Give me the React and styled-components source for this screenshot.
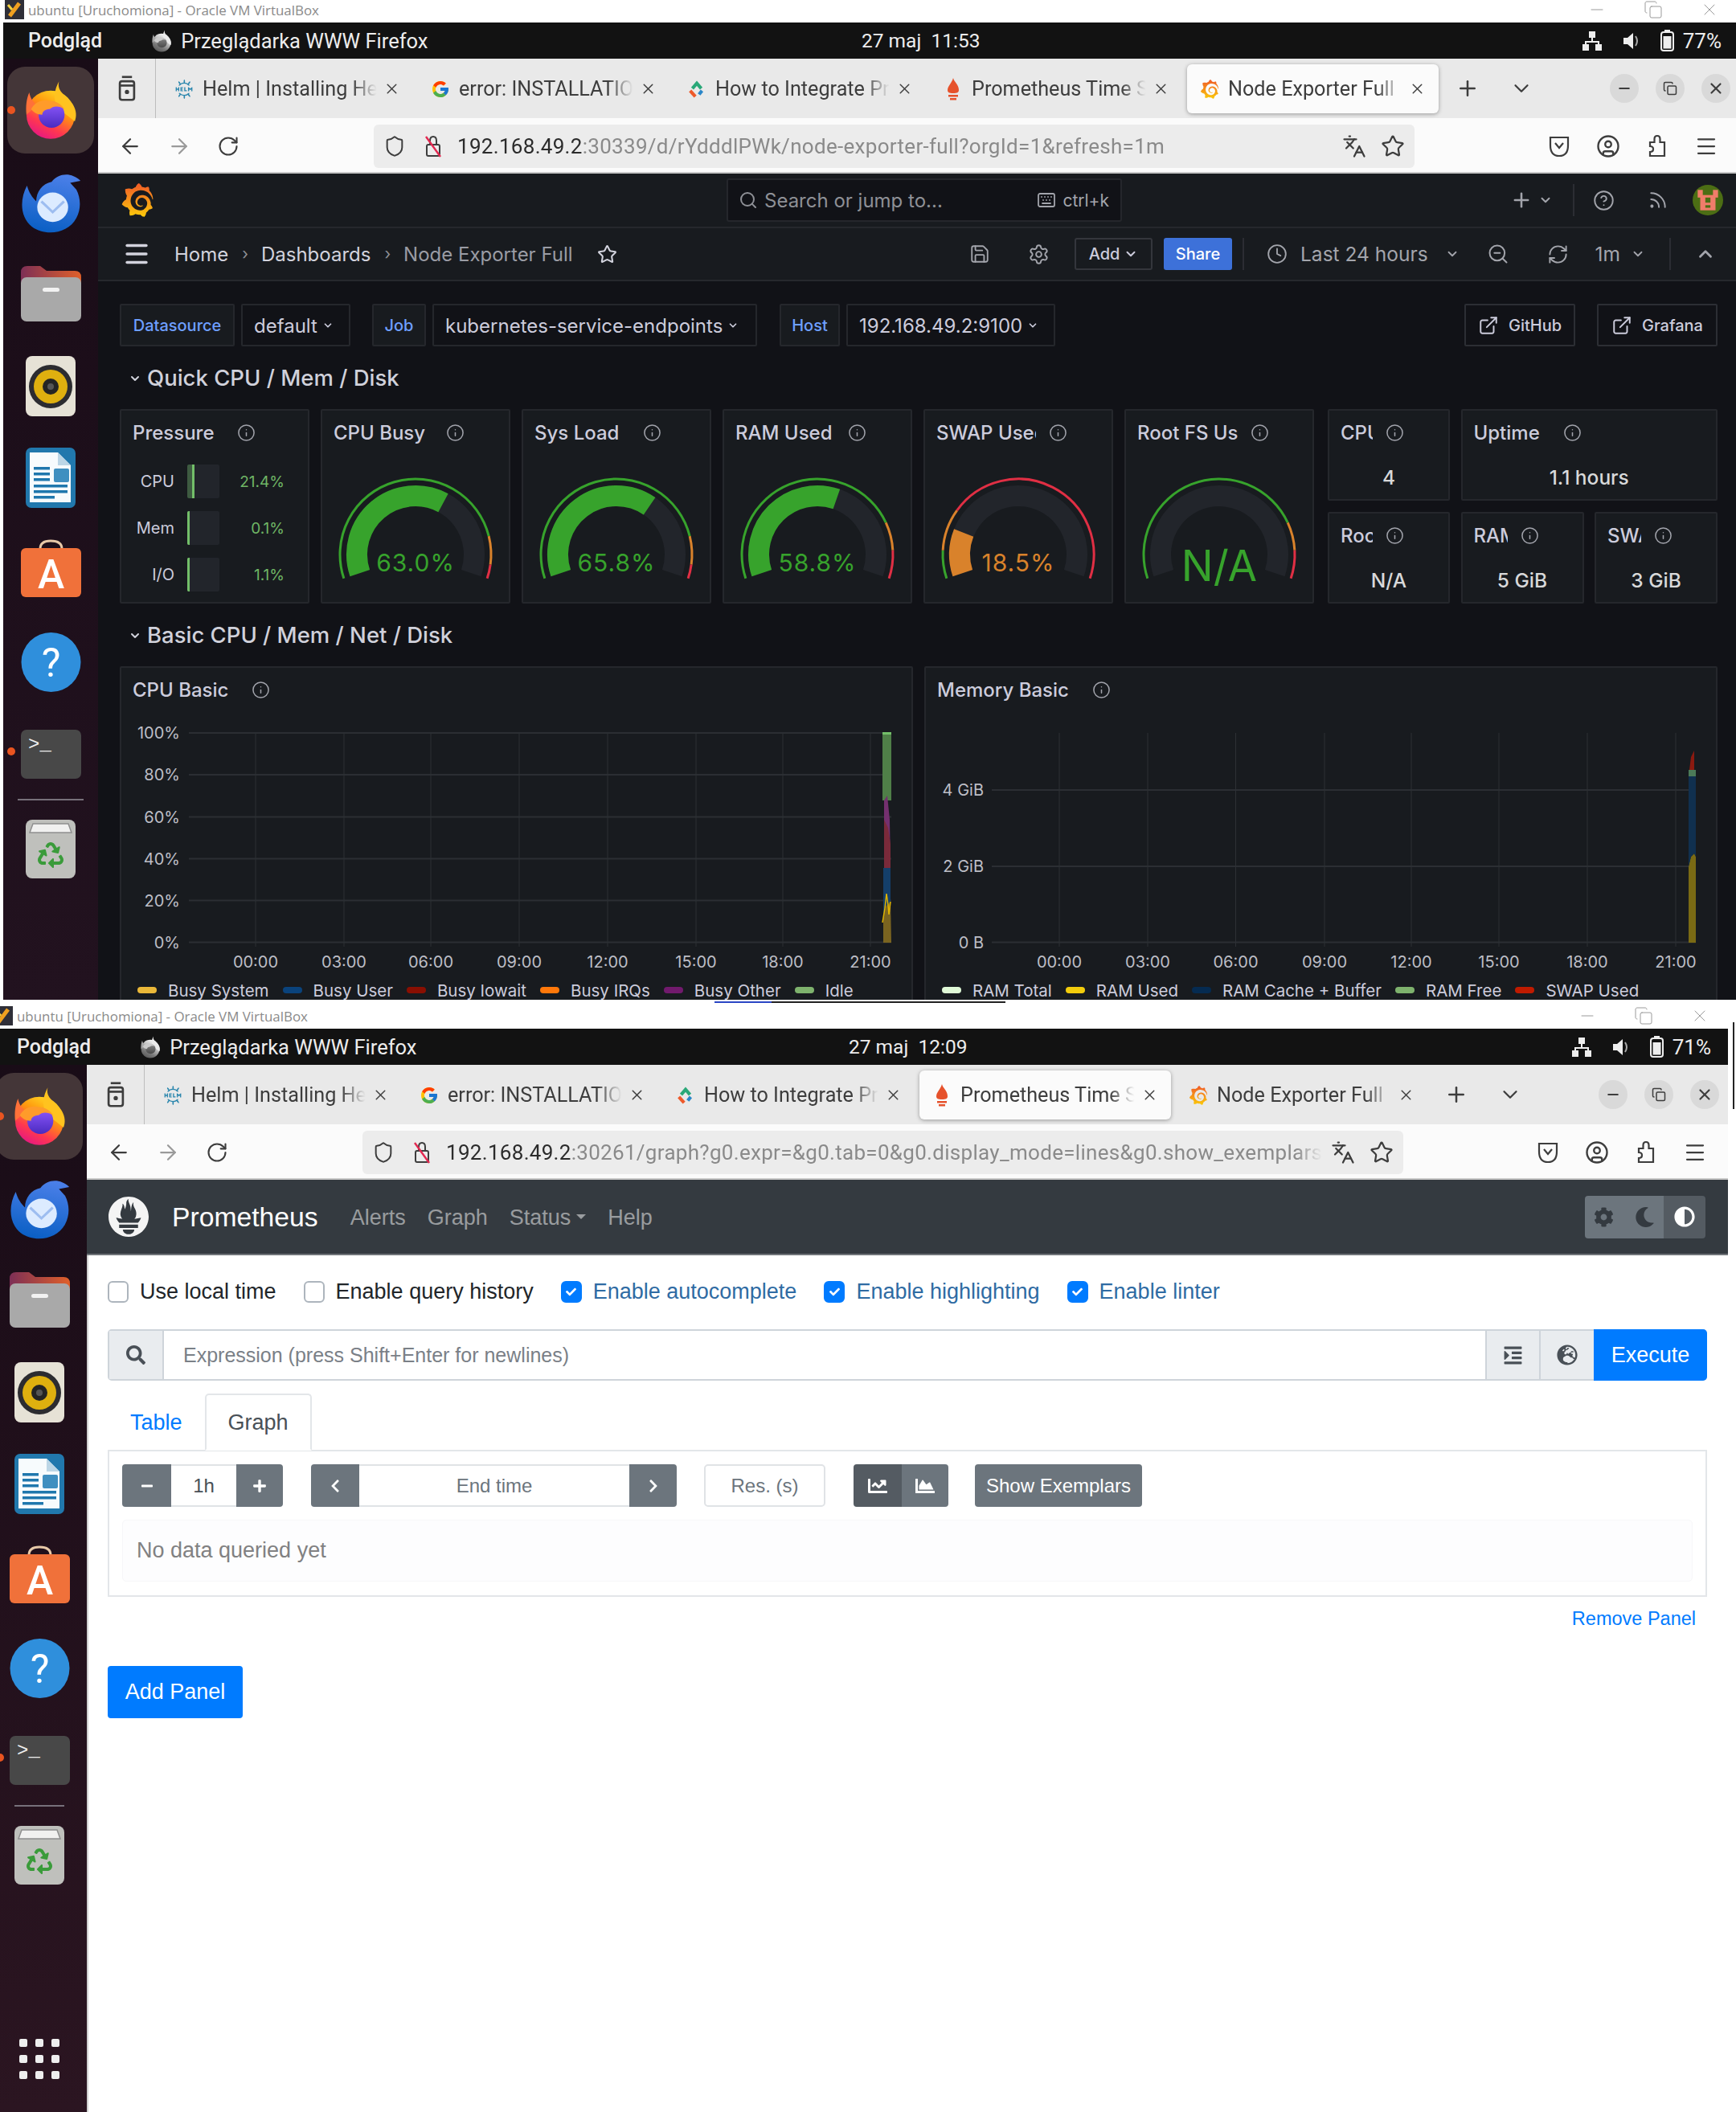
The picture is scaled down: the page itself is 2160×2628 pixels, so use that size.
import React from 'react'
import styled, { createGlobalStyle } from 'styled-components'
import {
  ArrowLeft, ArrowRight, RotateCw, Shield, Star, Languages, CircleUser, Menu, X, Plus,
  ChevronDown, ChevronUp, Minus, Copy, Search, Keyboard, CircleHelp, Rss, Save, Settings, Clock,
  ZoomOut, RefreshCw, ExternalLink, Info,
} from 'lucide-react'
import {
  FaSearch, FaIndent, FaGlobeEurope, FaCog, FaMoon, FaAdjust, FaChevronLeft, FaChevronRight,
  FaMinus, FaPlus, FaChartLine, FaChartArea, FaCheck, FaRecycle,
} from 'react-icons/fa'
import { FcGoogle } from 'react-icons/fc'
import { SiGrafana, SiPrometheus, SiHelm } from 'react-icons/si'

const GlobalStyle = createGlobalStyle`
  html, body { margin: 0; padding: 0; background: #fff; }
  * { box-sizing: border-box; }
  #root { width: 2160px; height: 2628px; overflow: hidden; }
`

const CHROME_FONT = `Roboto, "Noto Sans", sans-serif`
const GRAFANA_FONT = `Inter, "Noto Sans", sans-serif`
const PROM_FONT = `"Liberation Sans", Arial, sans-serif`

/* ---------- desktop shell ---------- */

const Shot = styled.div`
  position: relative;
  width: 2160px;
  height: ${({ $h }) => $h}px;
  overflow: hidden;
  background: #fff;
`
const TitleBar = styled.div`
  display: flex;
  align-items: center;
  height: ${({ $h }) => $h}px;
  padding: ${({ $pt }) => $pt}px 0 ${({ $pb }) => $pb}px ${({ $left }) => $left}px;
  font: 400 16.900px "Open Sans", sans-serif;
  color: #8a8a8a;
  background: #fff;
`
const BoxIcon = styled.svg`
  flex: none;
  margin-right: 5px;
`
const TitleButtons = styled.div`
  display: flex;
  gap: 46px;
  margin-left: auto;
  margin-right: ${({ $right }) => $right}px;
  color: #9a9a9a;
`
const Desktop = styled.div`
  width: ${({ $w }) => $w}px;
  height: ${({ $h }) => $h}px;
  margin-left: ${({ $ml }) => $ml}px;
  display: flex;
  flex-direction: column;
  overflow: hidden;
`
const TopBar = styled.div`
  flex: none;
  height: 45px;
  display: flex;
  align-items: center;
  padding: 0 ${({ $pr }) => $pr}px 0 ${({ $pl }) => $pl}px;
  background: #121212;
  color: #ededed;
  font: 500 25px ${CHROME_FONT};
`
const TopLeft = styled.div`
  display: flex;
  align-items: center;
  width: ${({ $w }) => $w}px;
`
const AppName = styled.div`
  display: flex;
  align-items: center;
  gap: 10px;
  margin-left: 60px;
  font-size: 25.500px;
  font-weight: 400;
`
const ClockText = styled.div`
  white-space: pre;
  font-size: 24.500px;
  font-weight: 400;
`
const TopRight = styled.div`
  display: flex;
  align-items: center;
  gap: 23px;
  margin-left: auto;
  font-weight: 400;
`
const BatteryPct = styled.span`
  margin-left: -12px;
  font-size: 26px;
`
const Body = styled.div`
  flex: 1;
  display: flex;
  min-height: 0;
`
const Dock = styled.div`
  flex: none;
  width: ${({ $w }) => $w}px;
  padding: 7px ${({ $pr }) => $pr}px 0 0;
  display: flex;
  flex-direction: column;
  background: linear-gradient(180deg, #190c17, ${({ $end }) => $end});
`
const DockItem = styled.div`
  position: relative;
  flex: none;
  height: 114px;
  padding-top: ${({ $dy }) => $dy || 0}px;
  display: flex;
  align-items: center;
  justify-content: center;
`
const ActiveTile = styled.div`
  position: absolute;
  top: 3px;
  bottom: 3px;
  left: 50%;
  width: 108px;
  margin-left: -54px;
  border-radius: 22px;
  background: #443638;
`
const RunningDot = styled.span`
  position: absolute;
  left: 50%;
  top: 50%;
  width: 10px;
  height: 10px;
  margin: -5px 0 0 -54px;
  border-radius: 50%;
  background: #e95420;
`
const DockSep = styled.div`
  flex: none;
  height: 2px;
  margin: 2px 18px 1px;
  background: #77707a;
`
const AppGrid = styled.div`
  margin-top: auto;
  margin-bottom: 41px;
  display: grid;
  grid-template-columns: repeat(3, 10px);
  justify-content: center;
  gap: 10px;
`
const GridDot = styled.span`
  height: 10px;
  border-radius: 2px;
  background: #eee;
`
const BlueLine = styled.div`
  position: absolute;
  left: 889px;
  top: 2px;
  width: 71px;
  height: 2px;
  background: #2a46c4;
`
const BlackLine = styled.div`
  position: absolute;
  left: 960px;
  top: 2px;
  width: 291px;
  height: 2px;
  background: #222;
`
const EdgeLine = styled.div`
  position: absolute;
  left: 2156px;
  top: 28px;
  width: 2px;
  height: 108px;
  background: #222;
`

/* ---------- dock icons ---------- */

const FirefoxIcon = ({ size = 74 }) => (
  <svg width={size} height={size} viewBox="0 0 64 64" style={{ position: 'relative' }}>
    <defs>
      <linearGradient id="ffA" x1="0.8" y1="0" x2="0.25" y2="1">
        <stop offset="0" stopColor="#ffe226" />
        <stop offset="0.38" stopColor="#ff980e" />
        <stop offset="0.72" stopColor="#ff3750" />
        <stop offset="1" stopColor="#e31587" />
      </linearGradient>
      <linearGradient id="ffB" x1="0.5" y1="0" x2="0.5" y2="1">
        <stop offset="0" stopColor="#9059ff" />
        <stop offset="1" stopColor="#4a2bc0" />
      </linearGradient>
    </defs>
    <circle cx="32" cy="37" r="26" fill="url(#ffA)" />
    <path d="M41 1 C38 13 50 16 56 26 C60 33 60 39 58 44 L40 30 C34 20 36 10 41 1Z" fill="#ffc31f" />
    <path d="M9 13 C6 20 5 28 6 37 L17 27 C13 23 10 19 9 13Z" fill="#ff7139" />
    <circle cx="33" cy="37" r="14" fill="url(#ffB)" />
    <path d="M11 31 C15 23 24 20 31 22 C37 22 43 25 47 31 C41 27 35 27 31 31 C27 31 23 33 23 37 C18 37 14 35 11 31Z" fill="#ff9b2a" />
  </svg>
)

const ThunderbirdIcon = () => (
  <svg width="82" height="78" viewBox="0 0 64 64" preserveAspectRatio="none" style={{ position: 'relative' }}>
    <defs>
      <linearGradient id="tbA" x1="0.6" y1="0" x2="0.4" y2="1">
        <stop offset="0" stopColor="#4a7fe8" />
        <stop offset="1" stopColor="#0a5fc4" />
      </linearGradient>
    </defs>
    <path d="M9 14 C2 28 2 46 14 56 C27 66 49 63 57 47 C62 37 61 26 57 18 L51 11 L61 9 C52 0 40 1 33 10 C24 12 18 20 18 30 C14 26 11 21 9 14Z" fill="url(#tbA)" />
    <ellipse cx="34" cy="36" rx="15" ry="15" fill="#dcebff" />
    <path d="M23 30 L34 41 L45 30" fill="none" stroke="#9dbdf0" strokeWidth="2.500" />
  </svg>
)

const FolderIcon = () => (
  <svg width="75" height="69" viewBox="0 0 75 69">
    <defs>
      <linearGradient id="fdA" x1="0" y1="0" x2="1" y2="0">
        <stop offset="0" stopColor="#7d2f56" />
        <stop offset="1" stopColor="#e0602a" />
      </linearGradient>
    </defs>
    <path d="M0 8 Q0 0 8 0 H24 L32 6 H67 Q75 6 75 14 V30 H0Z" fill="url(#fdA)" />
    <rect y="14" width="75" height="55" rx="7" fill="#a9a9a9" />
    <rect x="27" y="27" width="21" height="5" rx="2.500" fill="#f2f2f2" />
  </svg>
)

const SpeakerIcon = () => (
  <svg width="62" height="75" viewBox="0 0 62 75">
    <rect width="62" height="75" rx="8" fill="#e6e2d6" />
    <circle cx="31" cy="38" r="27" fill="#2c2c30" />
    <circle cx="31" cy="38" r="21" fill="#dfb00f" />
    <circle cx="31" cy="38" r="10" fill="#242424" />
    <circle cx="31" cy="38" r="4" fill="#555" />
  </svg>
)

const WriterIcon = () => (
  <svg width="62" height="75" viewBox="0 0 62 75">
    <rect width="62" height="75" rx="7" fill="#2178ad" />
    <path d="M5 6 H40 L56 22 V68 H5Z" fill="#f7fbfd" />
    <path d="M40 6 L56 22 H40Z" fill="#bcd6e6" />
    <rect x="35" y="26" width="19" height="17" rx="2" fill="#3f8fc0" />
    {[24, 31, 38].map(y => <rect key={y} x="10" y={y} width="20" height="3.500" fill="#1f77ad" />)}
    {[46, 53, 60].map(y => <rect key={y} x="10" y={y} width={y === 60 ? 26 : 42} height="3.500" fill="#1f77ad" />)}
  </svg>
)

const SoftwareIcon = () => (
  <svg width="75" height="72" viewBox="0 0 75 72">
    <path d="M24 12 Q24 2 37 2 Q51 2 51 12" fill="none" stroke="#e8c9a8" strokeWidth="3" />
    <rect y="11" width="75" height="61" rx="6" fill="#f0713a" />
    <text x="37.500" y="61" textAnchor="middle" fontFamily="Roboto, sans-serif" fontWeight="500" fontSize="50" fill="#fff">A</text>
  </svg>
)

const HelpIcon = () => (
  <svg width="75" height="74" viewBox="0 0 75 74">
    <circle cx="37.500" cy="37" r="37" fill="#2f8fdc" />
    <text x="37.500" y="55" textAnchor="middle" fontFamily="Roboto, sans-serif" fontWeight="400" fontSize="50" fill="#fff">?</text>
  </svg>
)

const TerminalIcon = () => (
  <svg width="75" height="61" viewBox="0 0 75 61">
    <rect width="75" height="61" rx="7" fill="#484848" />
    <text x="9" y="25" fontFamily="'Liberation Mono', monospace" fontSize="24" fill="#eee">&gt;_</text>
  </svg>
)

const TrashIcon = () => (
  <svg width="62" height="73" viewBox="0 0 62 73">
    <rect width="62" height="73" rx="8" fill="#bfc0bc" />
    <path d="M9 5 H53 L57 16 H5Z" fill="#f1f1f0" stroke="#8f8f8f" strokeWidth="1.500" />
    <FaRecycle x="15" y="28" size={32} color="#3a9b3a" />
  </svg>
)

const DOCK_ICONS = [
  { Icon: ThunderbirdIcon, dy: 4 },
  { Icon: FolderIcon, dy: 0 },
  { Icon: SpeakerIcon, dy: 2 },
  { Icon: WriterIcon, dy: 2 },
  { Icon: SoftwareIcon, dy: 0 },
  { Icon: HelpIcon, dy: 6 },
]

const DockBar = ({ w, pr, end, grid }) => (
  <Dock $w={w} $pr={pr} $end={end}>
    <DockItem>
      <ActiveTile />
      <RunningDot />
      <FirefoxIcon />
    </DockItem>
    {DOCK_ICONS.map(({ Icon, dy }, i) => <DockItem key={i} $dy={dy}><Icon /></DockItem>)}
    <DockItem $dy={6}>
      <RunningDot />
      <TerminalIcon />
    </DockItem>
    <DockSep />
    <DockItem $dy={4}><TrashIcon /></DockItem>
    {grid && (
      <AppGrid>
        {Array.from({ length: 9 }).map((_, i) => <GridDot key={i} />)}
      </AppGrid>
    )}
  </Dock>
)

const NetIcon = () => (
  <svg width="26" height="26" viewBox="0 0 26 26" fill="#eee">
    <rect x="9" y="1" width="8" height="8" />
    <rect x="1" y="17" width="8" height="8" />
    <rect x="17" y="17" width="8" height="8" />
    <path d="M12 9h2v4h8v4h-2v-2H6v2H4v-4h8z" />
  </svg>
)
const SoundIcon = () => (
  <svg width="26" height="26" viewBox="0 0 26 26" fill="#eee">
    <path d="M3 9h5l7-6v20l-7-6H3z" />
    <path d="M18 7 Q22 13 18 19" fill="none" stroke="#aaa" strokeWidth="2" />
  </svg>
)
const BatteryIcon = () => (
  <svg width="17" height="27" viewBox="0 0 17 27">
    <rect x="5" y="0" width="7" height="3" fill="#eee" />
    <rect x="1" y="3" width="15" height="23" rx="3" fill="none" stroke="#eee" strokeWidth="2" />
    <rect x="3.500" y="8" width="10" height="15.500" fill="#eee" />
  </svg>
)

const VBoxIcon = ({ w }) => (
  <BoxIcon width={w} height="24" viewBox={`${24 - w} 0 ${w} 24`}>
    <rect width="24" height="24" fill="#2f2f38" />
    <path d="M6 20 L18 4" stroke="#f0a020" strokeWidth="5" />
    <path d="M4 6 L9 12" stroke="#f5d040" strokeWidth="3" />
  </BoxIcon>
)

/* ---------- browser chrome ---------- */

const Browser = styled.div`
  flex: 0 0 2042px;
  display: flex;
  flex-direction: column;
  min-width: 0;
  background: ${({ $bg }) => $bg};
  font-family: ${CHROME_FONT};
`
const TabStrip = styled.div`
  flex: none;
  height: 74px;
  display: flex;
  align-items: center;
  background: #e9e9e9;
  color: #3d3d3d;
`
const ViewBtn = styled.div`
  flex: none;
  width: 72px;
  height: 100%;
  display: flex;
  align-items: center;
  justify-content: center;
  border-right: 1px solid #bdbdbd;
  margin-right: 7px;
`
const Tab = styled.div`
  flex: none;
  position: relative;
  width: 313px;
  height: 61px;
  margin-right: 6px;
  padding: 1px 16px 0;
  display: flex;
  align-items: center;
  border-radius: 6px;
  font-size: 25.200px;
  white-space: nowrap;
  background: ${({ $active }) => ($active ? '#fbfbfb' : 'transparent')};
  box-shadow: ${({ $active }) => ($active ? '0 1px 5px rgba(0,0,0,.35)' : 'none')};
`
const TabIcon = styled.span`
  flex: none;
  width: 24px;
  height: 28px;
  margin-right: 11px;
  display: flex;
  align-items: center;
  justify-content: center;
`
const TabTitle = styled.span`
  flex: 1;
  overflow: hidden;
  -webkit-mask-image: linear-gradient(90deg, #000 84%, transparent 98%);
  mask-image: linear-gradient(90deg, #000 84%, transparent 98%);
`
const TabClose = styled.span`
  flex: none;
  width: 22px;
  margin-left: 3px;
  display: flex;
  justify-content: center;
`
const StripBtn = styled.span`
  flex: none;
  width: 30px;
  display: flex;
  justify-content: center;
  margin-left: ${({ $ml }) => $ml}px;
`
const WinBtns = styled.div`
  display: flex;
  gap: 21px;
  margin-left: auto;
  margin-right: 11px;
`
const WinBtn = styled.span`
  width: 36px;
  height: 36px;
  border-radius: 50%;
  background: #d9d9d9;
  display: flex;
  align-items: center;
  justify-content: center;
`
const NavBar = styled.div`
  flex: none;
  height: 69px;
  display: flex;
  align-items: center;
  padding: 2px 0 0 25px;
  background: #fbfbfb;
  border-bottom: 2px solid #c8c8c8;
  color: #3d3d3d;
`
const NavBtn = styled.span`
  flex: none;
  width: 30px;
  margin-right: 31px;
  display: flex;
  justify-content: center;
  color: ${({ $muted }) => ($muted ? '#9a9a9a' : 'inherit')};
`
const UrlBar = styled.div`
  flex: none;
  width: 1295px;
  height: 54px;
  margin-left: 135px;
  padding: 0 12px;
  display: flex;
  align-items: center;
  border-radius: 6px;
  background: #ececec;
  font-size: 26px;
`
const LockWrap = styled.span`
  position: relative;
  flex: none;
  width: 30px;
  margin-left: 19px;
  margin-right: 15px;
  display: flex;
  justify-content: center;
`
const UrlText = styled.div`
  flex: none;
  width: 1090px;
  white-space: nowrap;
  overflow: hidden;
  letter-spacing: 0.3px;
  color: #8a8a8a;
  -webkit-mask-image: linear-gradient(90deg, #000 97%, transparent);
  mask-image: linear-gradient(90deg, #000 97%, transparent);
`
const UrlHost = styled.span`
  color: #2b2b2b;
`
const UrlIcons = styled.div`
  display: flex;
  gap: 18px;
  margin-left: auto;
`
const NavRight = styled.div`
  display: flex;
  gap: 31px;
  margin-left: 165px;
`

const HelmFav = () => <SiHelm size={26} color="#2a86ad" />
const GoogleFav = () => <FcGoogle size={26} />
const SlackishFav = () => (
  <svg width="28" height="28" viewBox="0 0 26 26" fill="none" strokeWidth="4.500">
    <path d="M7 12 L13 5 L19 12" stroke="#2aa878" />
    <path d="M4 15 L11 23" stroke="#ee5a2b" />
    <path d="M20 15 L16 20" stroke="#2a86c8" />
  </svg>
)
const FlameFav = () => (
  <svg width="18" height="28" viewBox="0 0 18 28">
    <path d="M9 0 C10 5 16 8 16 15 C16 18 14 19 9 19 C4 19 2 18 2 15 C2 10 7 7 9 0Z" fill="#e6522c" />
    <rect x="3" y="21" width="12" height="2.500" fill="#e6522c" />
    <rect x="5" y="25" width="8" height="2.500" fill="#e6522c" />
  </svg>
)
const GrafanaLogo = ({ size = 28 }) => (
  <svg width={size} height={size} viewBox="0 0 24 24">
    <defs>
      <linearGradient id="gfA" x1="0.5" y1="1" x2="0.5" y2="0">
        <stop offset="0" stopColor="#fbca0a" />
        <stop offset="1" stopColor="#f05a28" />
      </linearGradient>
    </defs>
    <SiGrafana size={24} fill="url(#gfA)" />
  </svg>
)
const ExtensionIcon = () => (
  <svg width="30" height="30" viewBox="0 0 30 30" fill="none" stroke="#3d3d3d" strokeWidth="2.200">
    <path d="M6 10 H11.500 V6 Q11.500 2 15 2 Q18.500 2 18.500 6 V10 H24 V27 H6 V22 Q10 22 10 18.500 Q10 15 6 15 Z" />
  </svg>
)

const TABS = [
  { title: 'Helm | Installing Helm', Icon: HelmFav },
  { title: 'error: INSTALLATION FAILED', Icon: GoogleFav },
  { title: 'How to Integrate Prometheus', Icon: SlackishFav },
  { title: 'Prometheus Time Series', Icon: FlameFav },
  { title: 'Node Exporter Full', Icon: () => <GrafanaLogo /> },
]

const BrowserChrome = ({ active, host, rest }) => (
  <>
    <TabStrip>
      <ViewBtn>
        <svg width="26" height="32" viewBox="0 0 26 36" fill="none" stroke="#3d3d3d" strokeWidth="3">
          <path d="M6 2 H20" />
          <rect x="3" y="8" width="20" height="26" rx="3" />
          <path d="M3 14 H23" />
          <circle cx="13" cy="23" r="1.500" />
        </svg>
      </ViewBtn>
      {TABS.map((t, i) => (
        <Tab key={t.title} $active={i === active}>
          <TabIcon><t.Icon /></TabIcon>
          <TabTitle>{t.title}</TabTitle>
          <TabClose><X size={21} strokeWidth={1.7} /></TabClose>
        </Tab>
      ))}
      <StripBtn $ml={15}><Plus size={30} strokeWidth={2} /></StripBtn>
      <StripBtn $ml={37}><ChevronDown size={32} strokeWidth={1.8} /></StripBtn>
      <WinBtns>
        <WinBtn><Minus size={20} strokeWidth={2.4} /></WinBtn>
        <WinBtn><Copy size={18} strokeWidth={2} /></WinBtn>
        <WinBtn><X size={22} strokeWidth={2.4} /></WinBtn>
      </WinBtns>
    </TabStrip>
    <NavBar>
      <NavBtn><ArrowLeft size={30} strokeWidth={1.8} /></NavBtn>
      <NavBtn $muted><ArrowRight size={30} strokeWidth={1.8} /></NavBtn>
      <NavBtn><RotateCw size={28} strokeWidth={1.8} /></NavBtn>
      <UrlBar>
        <Shield size={28} strokeWidth={1.7} />
        <LockWrap>
          <svg width="30" height="30" viewBox="0 0 30 30" fill="none" strokeWidth="2">
            <path d="M11 13 V8 Q11 3 15 3 Q19 3 19 8 V13" stroke="#3d3d3d" />
            <rect x="7" y="13" width="16" height="14" rx="2" stroke="#3d3d3d" />
            <path d="M6 3 L24 28" stroke="#e22850" strokeWidth="2.400" />
          </svg>
        </LockWrap>
        <UrlText><UrlHost>{host}</UrlHost>{rest}</UrlText>
        <UrlIcons>
          <Languages size={30} strokeWidth={1.8} />
          <Star size={30} strokeWidth={1.8} />
        </UrlIcons>
      </UrlBar>
      <NavRight>
        <svg width="30" height="30" viewBox="0 0 30 30" fill="none" stroke="#3d3d3d" strokeWidth="2.200">
          <path d="M4 4 H26 V14 Q26 27 15 27 Q4 27 4 14Z" />
          <path d="M10 11 L15 17 L20 11" />
        </svg>
        <CircleUser size={30} strokeWidth={1.9} />
        <ExtensionIcon />
        <Menu size={30} strokeWidth={1.8} />
      </NavRight>
    </NavBar>
  </>
)

/* ---------- grafana ---------- */

const GrafTop = styled.div`
  flex: none;
  height: 68px;
  display: flex;
  align-items: center;
  padding: 0 20px 0 28px;
  background: #181b1f;
  border-bottom: 2px solid #26282d;
  color: #a3a5ac;
  font-family: ${GRAFANA_FONT};
`
const GrafSearch = styled.div`
  width: 492px;
  height: 54px;
  margin-left: 712px;
  padding: 0 14px 0 13px;
  display: flex;
  align-items: center;
  gap: 8px;
  background: #111217;
  border: 2px solid #25272c;
  border-radius: 3px;
  font-size: 24px;
  color: #8e9096;
`
const KbdHint = styled.span`
  display: flex;
  align-items: center;
  gap: 8px;
  margin-left: auto;
  font-size: 21px;
  color: #a3a5ac;
`
const GrafTopRight = styled.div`
  display: flex;
  align-items: center;
  margin-left: auto;
`
const VDivider = styled.span`
  width: 2px;
  height: ${({ $h }) => $h || 40}px;
  background: #2b2d33;
  margin: 0 ${({ $r }) => $r}px 0 ${({ $l }) => $l}px;
`
const IconGap = styled.span`
  width: ${({ $w }) => $w}px;
`
const Avatar = styled.svg`
  border-radius: 50%;
  margin-left: 30px;
`
const GrafBar = styled(GrafTop)`
  height: 66px;
  padding: 0 29px 0 30px;
  font-size: 24px;
  color: #ccccdc;
`
const Crumb = styled.span`
  margin-left: ${({ $l }) => $l || 0}px;
  color: ${({ $muted }) => ($muted ? '#9a9ca4' : '#d2d3dd')};
  white-space: nowrap;
`
const CrumbSep = styled.span`
  color: #8e9096;
  margin: 0 16px 0 17px;
  font-size: 20px;
`
const ToolRight = styled.div`
  display: flex;
  align-items: center;
  margin-left: auto;
  color: #a3a5ac;
`
const AddBtn = styled.span`
  width: 97px;
  height: 40px;
  margin-left: 31px;
  display: flex;
  align-items: center;
  justify-content: center;
  gap: 5px;
  border: 2px solid #34363c;
  border-radius: 3px;
  font-size: 20px;
  font-weight: 500;
  color: #ccccdc;
`
const ShareBtn = styled.span`
  width: 85px;
  height: 40px;
  margin-left: 14px;
  display: flex;
  align-items: center;
  justify-content: center;
  border-radius: 3px;
  background: #3d71d9;
  font-size: 20px;
  font-weight: 500;
  color: #fff;
`
const RangeText = styled.span`
  margin-left: ${({ $l }) => $l}px;
  font-size: 24.500px;
  color: #a3a5ac;
  white-space: nowrap;
`
const GrafMain = styled.div`
  flex: 1;
  padding: 28px 26px 0 27px;
  background: #111217;
  font-family: ${GRAFANA_FONT};
  color: #ccccdc;
  overflow: hidden;
`
const VarRow = styled.div`
  height: 53px;
  display: flex;
  align-items: stretch;
`
const VarLabel = styled.div`
  width: ${({ $w }) => $w}px;
  margin-left: ${({ $l }) => $l || 0}px;
  padding-top: 1px;
  display: flex;
  align-items: center;
  justify-content: center;
  background: #181b1f;
  border: 2px solid #25272c;
  border-radius: 2px;
  font-size: 20px;
  font-weight: 500;
  color: #6e9fff;
`
const VarValue = styled.div`
  width: ${({ $w }) => $w}px;
  margin-left: 8px;
  padding: 1px 14px 0;
  display: flex;
  align-items: center;
  gap: 6px;
  background: #111217;
  border: 2px solid #25272c;
  border-radius: 2px;
  font-size: 24px;
  white-space: nowrap;
`
const LinkBtn = styled.div`
  width: ${({ $w }) => $w}px;
  margin-left: ${({ $l }) => $l}px;
  display: flex;
  align-items: center;
  justify-content: center;
  gap: 12px;
  border: 2px solid #2c2e34;
  border-radius: 2px;
  font-size: 20px;
  font-weight: 500;
`
const RowHead = styled.div`
  height: 78px;
  padding: 20px 0 2px 11px;
  display: flex;
  align-items: center;
`
const RowTitle = styled.div`
  height: 56px;
  display: flex;
  align-items: flex-start;
  gap: 7px;
  line-height: 38px;
  font-size: 27.500px;
  font-weight: 500;
  color: #d0d1db;
`
const Chevron = styled(ChevronDown)`
  margin-top: 12px;
`
const QuickRow = styled.div`
  height: 242px;
  display: flex;
  gap: 14px;
`
const Panel = styled.div`
  flex: none;
  width: ${({ $w }) => ($w ? `${$w}px` : 'auto')};
  background: #181b1f;
  border: 2px solid #25272c;
  border-radius: 2px;
  padding-top: 13px;
  overflow: hidden;
`
const PanelHead = styled.div`
  height: 28px;
  padding-left: 14px;
  display: flex;
  align-items: center;
  gap: 16px;
  color: #a2a4ac;
`
const PanelName = styled.span`
  flex: none;
  width: ${({ $w }) => $w}px;
  overflow: hidden;
  white-space: nowrap;
  font-size: 24px;
  font-weight: 500;
  color: #ccccdc;
`
const StatGrid = styled.div`
  flex: none;
  width: 485px;
  margin-left: 3px;
  display: grid;
  grid-template-columns: 152px 153px 153px;
  grid-template-rows: 114px 114px;
  column-gap: 13.500px;
  row-gap: 14px;
`
const StatWide = styled(Panel)`
  grid-column: span 2;
`
const StatValue = styled.div`
  margin-top: 26px;
  text-align: center;
  font-size: 24.500px;
  font-weight: 500;
  line-height: 32px;
  color: #d8d9da;
`
const BarGauge = styled.div`
  margin-top: 26px;
  padding-left: 14px;
  display: grid;
  grid-template-columns: 52px 40px 65px;
  column-gap: 16px;
  grid-auto-rows: 42px;
  row-gap: 16px;
  align-items: center;
`
const BarLabel = styled.div`
  text-align: right;
  font-size: 20px;
  color: #ccccdc;
`
const BarTrack = styled.div`
  height: 42px;
  border-radius: 2px;
  background: #22252b;
  overflow: hidden;
`
const BarFill = styled.div`
  height: 100%;
  border-right: 3px solid #73bf69;
  background: rgba(115, 191, 105, 0.35);
`
const BarValue = styled.div`
  text-align: right;
  font-size: 19px;
  color: #6fb665;
`
const GaugeWrap = styled.div`
  margin-top: 37px;
  display: flex;
  justify-content: center;
`
const ChartRow = styled.div`
  display: flex;
  gap: 14px;
  height: 420px;
`
const ChartPanel = styled(Panel)`
  width: 987px;
  height: 440px;
`
const ChartSvg = styled.svg`
  display: block;
  margin: 18px 0 0 -2px;
`
const Legend = styled.div`
  height: 34px;
  padding-left: 20px;
  display: flex;
  align-items: center;
  gap: 17px;
  font-size: 20.500px;
  color: #ccccdc;
  white-space: nowrap;
`
const LegendItem = styled.span`
  display: flex;
  align-items: center;
  gap: 14px;
`
const Swatch = styled.span`
  width: 24px;
  height: 8px;
  border-radius: 4px;
  background: ${({ $c }) => $c};
`

const ARC_START = -108.5
const ARC_SPAN = 217
const polar = (r, deg) => {
  const a = ((deg - 90) * Math.PI) / 180
  return [100 + r * Math.cos(a), 101 + r * Math.sin(a)]
}
const arc = (r, from, to) => {
  const a0 = ARC_START + from * ARC_SPAN
  const a1 = ARC_START + to * ARC_SPAN
  const [x0, y0] = polar(r, a0)
  const [x1, y1] = polar(r, a1)
  return `M${x0} ${y0} A${r} ${r} 0 ${a1 - a0 > 180 ? 1 : 0} 1 ${x1} ${y1}`
}

const Gauge = ({ value, label, color, stops, big }) => {
  const edges = [0, ...stops.map(s => s.at), 1]
  return (
    <svg width="200" height="140" viewBox="0 0 200 140">
      <path d={arc(73, 0, 1)} fill="none" stroke="#22252b" strokeWidth="26" />
      {value > 0 && <path d={arc(73, 0, value)} fill="none" stroke={color} strokeWidth="26" />}
      {edges.slice(0, -1).map((from, i) => (
        <path
          key={i}
          d={arc(94, from, edges[i + 1])}
          fill="none"
          stroke={i === 0 ? stops[0].first : stops[i - 1].color}
          strokeWidth="3"
        />
      ))}
      <text
        x="100"
        y={big ? 134 : 122}
        textAnchor="middle"
        fontFamily="Inter, sans-serif"
        fontSize={big ? 53 : 30}
        letterSpacing={big ? 0 : 1}
        fill={color}
      >
        {label}
      </text>
    </svg>
  )
}

const thresholds = (a, b, first = '#37a32c') => [
  { at: a, color: '#d9822b', first },
  { at: b, color: '#e02f44' },
]

const PanelTitle = ({ w, children }) => (
  <PanelHead>
    <PanelName $w={w}>{children}</PanelName>
    <Info size={23} strokeWidth={1.6} />
  </PanelHead>
)

const GAUGES = [
  { title: 'CPU Busy', w: 124, value: 0.63, label: '63.0%', a: 0.85, b: 0.95 },
  { title: 'Sys Load', w: 119, value: 0.658, label: '65.8%', a: 0.85, b: 0.95 },
  { title: 'RAM Used', w: 124, value: 0.588, label: '58.8%', a: 0.8, b: 0.9 },
  { title: 'SWAP Used', w: 124, value: 0.185, label: '18.5%', a: 0.1, b: 0.25, color: '#d9822b' },
  { title: 'Root FS Used', w: 125, value: 0, label: 'N/A', a: 0.8, b: 0.9, big: true },
]

const BARS = [
  { name: 'CPU', pct: 21.4, text: '21.4%' },
  { name: 'Mem', pct: 0.1, text: '0.1%' },
  { name: 'I/O', pct: 1.1, text: '1.1%' },
]

const TICKS = ['00:00', '03:00', '06:00', '09:00', '12:00', '15:00', '18:00', '21:00']

const ChartGrid = ({ left, xs, ys, labelX }) => (
  <g fontFamily="Inter, sans-serif" fontSize="20" fill="#bdbec6">
    {ys.map(([y, t]) => (
      <g key={t}>
        <line x1={left} x2="960" y1={y} y2={y} stroke="#2b2e33" strokeWidth="2" />
        <text x={labelX} y={y + 7} textAnchor="end">{t}</text>
      </g>
    ))}
    {xs.map((x, i) => (
      <g key={x}>
        <line x1={x} x2={x} y1="22" y2="288" stroke="#2d3035" strokeWidth="1" />
        <text x={x} y="314" textAnchor="middle">{TICKS[i]}</text>
      </g>
    ))}
  </g>
)

const CpuChart = () => (
  <ChartSvg width="985" height="325" viewBox="0 0 985 325">
    <ChartGrid
      left={86}
      labelX={75}
      xs={[169, 279, 387, 497, 607, 717, 825, 934]}
      ys={[[22, '100%'], [74, '80%'], [126.500, '60%'], [178.500, '40%'], [230.500, '20%'], [282.500, '0%']]}
    />
    <rect x="949" y="22" width="11" height="84" fill="#4f7f48" />
    <rect x="949" y="21" width="11" height="3" fill="#73bf69" />
    <polygon points="951,106 955,100 958,130 959,190 951,190" fill="#74306f" />
    <polygon points="951,130 956,140 959,160 959,220 951,240" fill="#7a2a3a" />
    <polygon points="950,190 959,190 959,235 950,250" fill="#143f6a" />
    <polygon points="950,250 953,238 959,232 960,283 950,283" fill="#7a6420" />
    <polyline points="949,258 952,240 954,222 956,236 957,248 959,232" fill="none" stroke="#e0b400" strokeWidth="1.500" />
  </ChartSvg>
)

const MemChart = () => (
  <ChartSvg width="985" height="325" viewBox="0 0 985 325">
    <ChartGrid
      left={84}
      labelX={74}
      xs={[168, 278, 387.500, 498, 606, 715, 825, 935]}
      ys={[[93, '4 GiB'], [188, '2 GiB'], [282.500, '0 B']]}
    />
    <polygon points="951,283 951,188 954,176 958,172 960,176 960,283" fill="#7a6a14" />
    <polygon points="951,74 960,74 960,176 958,172 954,176 951,188" fill="#10304f" />
    <rect x="951" y="68" width="9" height="8" fill="#4c7a58" />
    <polygon points="952,68 954,52 958,44 958,68" fill="#8b1a10" />
  </ChartSvg>
)

const CPU_LEGEND = [
  ['Busy System', '#eab839'],
  ['Busy User', '#0a437c'],
  ['Busy Iowait', '#890f02'],
  ['Busy IRQs', '#ff780a'],
  ['Busy Other', '#711a6d'],
  ['Idle', '#7eb26d'],
]
const MEM_LEGEND = [
  ['RAM Total', '#e0f9d7'],
  ['RAM Used', '#f2cc0c'],
  ['RAM Cache + Buffer', '#052b51'],
  ['RAM Free', '#7eb26d'],
  ['SWAP Used', '#bf1b00'],
]

const LegendRow = ({ items }) => (
  <Legend>
    {items.map(([name, c]) => (
      <LegendItem key={name}><Swatch $c={c} />{name}</LegendItem>
    ))}
  </Legend>
)

const RowHeader = ({ children }) => (
  <RowHead>
    <RowTitle><Chevron size={16} strokeWidth={3} />{children}</RowTitle>
  </RowHead>
)

const Grafana = () => (
  <>
    <GrafTop>
      <GrafanaLogo size={42} />
      <GrafSearch>
        <Search size={24} strokeWidth={2} />
        Search or jump to...
        <KbdHint><Keyboard size={24} strokeWidth={1.8} />ctrl+k</KbdHint>
      </GrafSearch>
      <GrafTopRight>
        <Plus size={28} strokeWidth={2.2} />
        <ChevronDown size={18} strokeWidth={2.6} style={{ marginLeft: 7 }} />
        <VDivider $l={25} $r={23} />
        <CircleHelp size={27} strokeWidth={1.7} />
        <IconGap $w={41} />
        <Rss size={26} strokeWidth={1.8} />
        <Avatar width="38" height="38" viewBox="0 0 12 12">
          <rect width="12" height="12" fill="#4c6e14" />
          <rect x="3" y="4" width="6" height="6" fill="#f07d6a" />
          <rect x="2" y="2" width="2" height="3" fill="#f07d6a" />
          <rect x="8" y="2" width="2" height="3" fill="#f07d6a" />
          <rect x="5" y="5" width="2" height="2" fill="#4c6e14" />
          <rect x="5" y="8" width="2" height="1" fill="#4c6e14" />
        </Avatar>
      </GrafTopRight>
    </GrafTop>
    <GrafBar>
      <Menu size={36} strokeWidth={2.2} color="#d2d3dd" />
      <Crumb $l={29}>Home</Crumb>
      <CrumbSep>›</CrumbSep>
      <Crumb>Dashboards</Crumb>
      <CrumbSep>›</CrumbSep>
      <Crumb $muted>Node Exporter Full</Crumb>
      <IconGap $w={30} />
      <Star size={25} strokeWidth={2} color="#d2d3dd" />
      <ToolRight>
        <Save size={26} strokeWidth={1.7} />
        <IconGap $w={47} />
        <Settings size={27} strokeWidth={1.7} />
        <AddBtn>Add<ChevronDown size={18} strokeWidth={2.6} /></AddBtn>
        <ShareBtn>Share</ShareBtn>
        <VDivider $l={13} $r={28} />
        <Clock size={26} strokeWidth={1.7} />
        <RangeText $l={16}>Last 24 hours</RangeText>
        <IconGap $w={21} />
        <ChevronDown size={18} strokeWidth={2.4} />
        <IconGap $w={34} />
        <ZoomOut size={28} strokeWidth={1.7} />
        <IconGap $w={47} />
        <RefreshCw size={27} strokeWidth={1.7} />
        <RangeText $l={33}>1m</RangeText>
        <IconGap $w={13} />
        <ChevronDown size={18} strokeWidth={2.4} />
        <VDivider $l={30} $r={30} />
        <ChevronUp size={26} strokeWidth={2.6} />
      </ToolRight>
    </GrafBar>
    <GrafMain>
      <VarRow>
        <VarLabel $w={143}>Datasource</VarLabel>
        <VarValue $w={136}>default<ChevronDown size={14} strokeWidth={3} /></VarValue>
        <VarLabel $w={67} $l={27}>Job</VarLabel>
        <VarValue $w={404}>kubernetes-service-endpoints<ChevronDown size={14} strokeWidth={3} /></VarValue>
        <VarLabel $w={75} $l={28}>Host</VarLabel>
        <VarValue $w={260}>192.168.49.2:9100<ChevronDown size={14} strokeWidth={3} /></VarValue>
        <LinkBtn $w={138} $l={509}><ExternalLink size={26} strokeWidth={1.8} />GitHub</LinkBtn>
        <LinkBtn $w={150} $l={27}><ExternalLink size={26} strokeWidth={1.8} />Grafana</LinkBtn>
      </VarRow>
      <RowHeader>Quick CPU / Mem / Disk</RowHeader>
      <QuickRow>
        <Panel $w={236}>
          <PanelTitle w={114}>Pressure</PanelTitle>
          <BarGauge>
            {BARS.map(b => (
              <React.Fragment key={b.name}>
                <BarLabel>{b.name}</BarLabel>
                <BarTrack><BarFill style={{ width: `${Math.max(b.pct, 7)}%` }} /></BarTrack>
                <BarValue>{b.text}</BarValue>
              </React.Fragment>
            ))}
          </BarGauge>
        </Panel>
        {GAUGES.map(g => (
          <Panel key={g.title} $w={236}>
            <PanelTitle w={g.w}>{g.title}</PanelTitle>
            <GaugeWrap>
              <Gauge
                value={g.value}
                label={g.label}
                big={g.big}
                color={g.color || '#37a32c'}
                stops={thresholds(g.a, g.b)}
              />
            </GaugeWrap>
          </Panel>
        ))}
        <StatGrid>
          <Panel>
            <PanelTitle w={40}>CPU Cores</PanelTitle>
            <StatValue>4</StatValue>
          </Panel>
          <StatWide>
            <PanelTitle w={95}>Uptime</PanelTitle>
            <StatValue>1.1 hours</StatValue>
          </StatWide>
          <Panel>
            <PanelTitle w={40}>RootFS Total</PanelTitle>
            <StatValue>N/A</StatValue>
          </Panel>
          <Panel>
            <PanelTitle w={42}>RAM Total</PanelTitle>
            <StatValue>5 GiB</StatValue>
          </Panel>
          <Panel>
            <PanelTitle w={42}>SWAP Total</PanelTitle>
            <StatValue>3 GiB</StatValue>
          </Panel>
        </StatGrid>
      </QuickRow>
      <RowHeader>Basic CPU / Mem / Net / Disk</RowHeader>
      <ChartRow>
        <ChartPanel>
          <PanelTitle w={132}>CPU Basic</PanelTitle>
          <CpuChart />
          <LegendRow items={CPU_LEGEND} />
        </ChartPanel>
        <ChartPanel>
          <PanelTitle w={177}>Memory Basic</PanelTitle>
          <MemChart />
          <LegendRow items={MEM_LEGEND} />
        </ChartPanel>
      </ChartRow>
    </GrafMain>
  </>
)

/* ---------- prometheus ---------- */

const PromNav = styled.div`
  flex: none;
  height: 94px;
  display: flex;
  align-items: center;
  padding: 0 28px 0 27px;
  background: #343a40;
  border-bottom: 2px solid #6f7479;
  font-family: ${PROM_FONT};
`
const Brand = styled.span`
  margin-left: 29px;
  margin-right: 40px;
  font-size: 33.700px;
  color: #fff;
`
const PromLink = styled.span`
  margin-right: 27px;
  padding-top: 2px;
  font-size: 27px;
  color: rgba(255, 255, 255, 0.5);
  display: flex;
  align-items: center;
`
const Caret = styled.span`
  width: 0;
  height: 0;
  margin-left: 7px;
  margin-bottom: 2px;
  border-top: 6px solid rgba(255, 255, 255, 0.5);
  border-left: 6px solid transparent;
  border-right: 6px solid transparent;
`
const ThemeGroup = styled.div`
  display: flex;
  margin-left: auto;
  height: 53px;
  border-radius: 4px;
  overflow: hidden;
`
const ThemeBtn = styled.span`
  width: ${({ $w }) => $w}px;
  display: flex;
  align-items: center;
  justify-content: center;
  gap: 26px;
  color: ${({ $on }) => ($on ? '#fff' : '#343a40')};
  background: ${({ $on }) => ($on ? '#545b62' : '#6c757d')};
`
const PromPage = styled.div`
  flex: 1;
  padding: 0 26px 0 24px;
  background: #fff;
  border-left: 2px solid #d0d0d0;
  font-family: ${PROM_FONT};
  font-size: 27px;
  color: #212529;
`
const Options = styled.div`
  height: 92px;
  padding-bottom: 2px;
  display: flex;
  align-items: center;
  gap: 34px;
`
const Option = styled.label`
  display: flex;
  align-items: center;
  gap: 14px;
  color: ${({ $on }) => ($on ? '#2f6ba3' : '#212529')};
`
const CheckBox = styled.span`
  flex: none;
  width: 26px;
  height: 27px;
  display: flex;
  align-items: center;
  justify-content: center;
  border-radius: 6px;
  border: 2px solid ${({ $on }) => ($on ? '#007bff' : '#adb5bd')};
  background: ${({ $on }) => ($on ? '#007bff' : '#fff')};
  color: #fff;
`
const ExprGroup = styled.div`
  height: 64px;
  display: flex;
  border: 2px solid #ced4da;
  border-radius: 5px;
`
const Addon = styled.div`
  flex: none;
  width: ${({ $w }) => $w}px;
  display: flex;
  align-items: center;
  justify-content: center;
  background: #e9ecef;
  border-left: ${({ $bl }) => ($bl ? '2px solid #ced4da' : 'none')};
  border-right: ${({ $br }) => ($br ? '2px solid #ced4da' : 'none')};
  color: #495057;
`
const ExprInput = styled.div`
  flex: 1;
  padding-left: 24px;
  display: flex;
  align-items: center;
  font-size: 25px;
  color: #7a8087;
`
const ExecuteBtn = styled.div`
  flex: none;
  width: 141px;
  margin: -2px -2px -2px 0;
  display: flex;
  align-items: center;
  justify-content: center;
  border-radius: 0 5px 5px 0;
  background: #007bff;
  color: #fff;
`
const TabRow = styled.div`
  height: 71px;
  margin-top: 16px;
  display: flex;
  margin-bottom: -1px;
  position: relative;
`
const PromTab = styled.div`
  height: 71px;
  padding: 2px ${({ $active }) => ($active ? 27 : 26)}px 0;
  display: flex;
  align-items: center;
  border: 2px solid ${({ $active }) => ($active ? '#e3e6e9' : 'transparent')};
  border-bottom-color: ${({ $active }) => ($active ? '#fff' : 'transparent')};
  border-radius: 5px 5px 0 0;
  color: ${({ $active }) => ($active ? '#495057' : '#007bff')};
`
const TabBody = styled.div`
  height: 183px;
  padding: 16px 16px 0;
  border: 2px solid #e3e6e9;
`
const Controls = styled.div`
  height: 53px;
  display: flex;
  align-items: stretch;
  color: #495057;
  font-size: 24px;
`
const Cluster = styled.div`
  display: flex;
  margin-left: ${({ $l }) => $l || 0}px;
`
const GrayBtn = styled.div`
  flex: none;
  width: ${({ $w }) => $w}px;
  display: flex;
  align-items: center;
  justify-content: center;
  color: #fff;
  background: ${({ $dark }) => ($dark ? '#545b62' : '#6c757d')};
  border-radius: ${({ $r }) => $r || '0'};
`
const FieldBox = styled.div`
  flex: none;
  width: ${({ $w }) => $w}px;
  margin-left: ${({ $l }) => $l || 0}px;
  display: flex;
  align-items: center;
  justify-content: center;
  border: 2px solid #e0e3e6;
  border-left-width: ${({ $l }) => ($l ? 2 : 0)}px;
  border-right-width: ${({ $l }) => ($l ? 2 : 0)}px;
  border-radius: ${({ $l }) => ($l ? 5 : 0)}px;
  color: ${({ $dim }) => ($dim ? '#6c757d' : '#495057')};
`
const NoData = styled.div`
  height: 77px;
  margin-top: 16px;
  padding-left: 17px;
  display: flex;
  align-items: center;
  background: #fdfdfe;
  border: 1px solid #f7f7f9;
  border-radius: 5px;
  font-size: 27px;
  color: #818182;
`
const RemoveLink = styled.div`
  height: 54px;
  padding-right: 14px;
  display: flex;
  align-items: center;
  justify-content: flex-end;
  font-size: 23.500px;
  color: #007bff;
`
const AddPanel = styled.div`
  width: 168px;
  height: 65px;
  margin-top: 32px;
  display: flex;
  align-items: center;
  justify-content: center;
  border-radius: 4px;
  background: #007bff;
  color: #fff;
`

const OPTIONS = [
  ['Use local time', false],
  ['Enable query history', false],
  ['Enable autocomplete', true],
  ['Enable highlighting', true],
  ['Enable linter', true],
]

const Prometheus = () => (
  <>
    <PromNav>
      <SiPrometheus size={50} color="#f4f4f4" />
      <Brand>Prometheus</Brand>
      <PromLink>Alerts</PromLink>
      <PromLink>Graph</PromLink>
      <PromLink>Status<Caret /></PromLink>
      <PromLink>Help</PromLink>
      <ThemeGroup>
        <ThemeBtn $w={98}><FaCog size={25} /><FaMoon size={25} /></ThemeBtn>
        <ThemeBtn $w={52} $on><FaAdjust size={26} /></ThemeBtn>
      </ThemeGroup>
    </PromNav>
    <PromPage>
      <Options>
        {OPTIONS.map(([label, on]) => (
          <Option key={label} $on={on}>
            <CheckBox $on={on}>{on && <FaCheck size={13} />}</CheckBox>
            {label}
          </Option>
        ))}
      </Options>
      <ExprGroup>
        <Addon $w={68} $br><FaSearch size={24} /></Addon>
        <ExprInput>Expression (press Shift+Enter for newlines)</ExprInput>
        <Addon $w={67} $bl><FaIndent size={25} /></Addon>
        <Addon $w={68} $bl><FaGlobeEurope size={26} /></Addon>
        <ExecuteBtn>Execute</ExecuteBtn>
      </ExprGroup>
      <TabRow>
        <PromTab>Table</PromTab>
        <PromTab $active>Graph</PromTab>
      </TabRow>
      <TabBody>
        <Controls>
          <Cluster>
            <GrayBtn $w={61} $r="4px 0 0 4px"><FaMinus size={16} /></GrayBtn>
            <FieldBox $w={81}>1h</FieldBox>
            <GrayBtn $w={58} $r="0 4px 4px 0"><FaPlus size={18} /></GrayBtn>
          </Cluster>
          <Cluster $l={35}>
            <GrayBtn $w={60} $r="4px 0 0 4px"><FaChevronLeft size={18} /></GrayBtn>
            <FieldBox $w={336} $dim>End time</FieldBox>
            <GrayBtn $w={59} $r="0 4px 4px 0"><FaChevronRight size={18} /></GrayBtn>
          </Cluster>
          <FieldBox $w={151} $l={34} $dim>Res. (s)</FieldBox>
          <Cluster $l={35}>
            <GrayBtn $w={60} $dark $r="4px 0 0 4px"><FaChartLine size={24} /></GrayBtn>
            <GrayBtn $w={58} $r="0 4px 4px 0"><FaChartArea size={24} /></GrayBtn>
          </Cluster>
          <Cluster $l={33}>
            <GrayBtn $w={208} $r="4px">Show Exemplars</GrayBtn>
          </Cluster>
        </Controls>
        <NoData>No data queried yet</NoData>
      </TabBody>
      <RemoveLink>Remove Panel</RemoveLink>
      <AddPanel>Add Panel</AddPanel>
    </PromPage>
  </>
)

/* ---------- page ---------- */

const FirefoxLogoGray = styled.span`
  display: flex;
  filter: grayscale(1) brightness(1.2);
`

const TopStrip = ({ pl, pr, leftW, time, battery }) => (
  <TopBar $pl={pl} $pr={pr}>
    <TopLeft $w={leftW}>
      Podgląd
      <AppName><FirefoxLogoGray><FirefoxIcon size={28} /></FirefoxLogoGray>Przeglądarka WWW Firefox</AppName>
    </TopLeft>
    <ClockText>{time}</ClockText>
    <TopRight>
      <NetIcon /><SoundIcon /><BatteryIcon /><BatteryPct>{battery}</BatteryPct>
    </TopRight>
  </TopBar>
)

const VBoxTitle = ({ h, pt, pb, left, iconW, right }) => (
  <TitleBar $h={h} $pt={pt} $pb={pb} $left={left}>
    <VBoxIcon w={iconW} />
    ubuntu [Uruchomiona] - Oracle VM VirtualBox
    <TitleButtons $right={right}>
      <Minus size={24} strokeWidth={1} />
      <Copy size={24} strokeWidth={1} />
      <X size={24} strokeWidth={1} />
    </TitleButtons>
  </TitleBar>
)

const App = () => (
  <>
    <GlobalStyle />
    <Shot $h={1244}>
      <VBoxTitle h={28} pt={0} pb={4} left={6} iconW={24} right={21} />
      <Desktop $w={2156} $h={1216} $ml={4}>
        <TopStrip pl={31} pr={18} leftW={1037} time="27 maj  11:53" battery="77%" />
        <Body>
          <DockBar w={118} pr={0} end="#22121f" />
          <Browser $bg="#111217">
            <BrowserChrome
              active={4}
              host="192.168.49.2"
              rest=":30339/d/rYdddlPWk/node-exporter-full?orgId=1&refresh=1m"
            />
            <Grafana />
          </Browser>
        </Body>
      </Desktop>
    </Shot>
    <Shot $h={1384}>
      <BlueLine />
      <BlackLine />
      <EdgeLine />
      <VBoxTitle h={36} pt={4} pb={0} left={0} iconW={16} right={33} />
      <Desktop $w={2150} $h={1348} $ml={0}>
        <TopStrip pl={21} pr={21} leftW={1035} time="27 maj  12:09" battery="71%" />
        <Body>
          <DockBar w={108} pr={10} end="#2b1521" grid />
          <Browser $bg="#fff">
            <BrowserChrome
              active={3}
              host="192.168.49.2"
              rest=":30261/graph?g0.expr=&g0.tab=0&g0.display_mode=lines&g0.show_exemplars=0"
            />
            <Prometheus />
          </Browser>
        </Body>
      </Desktop>
    </Shot>
  </>
)

export default App
